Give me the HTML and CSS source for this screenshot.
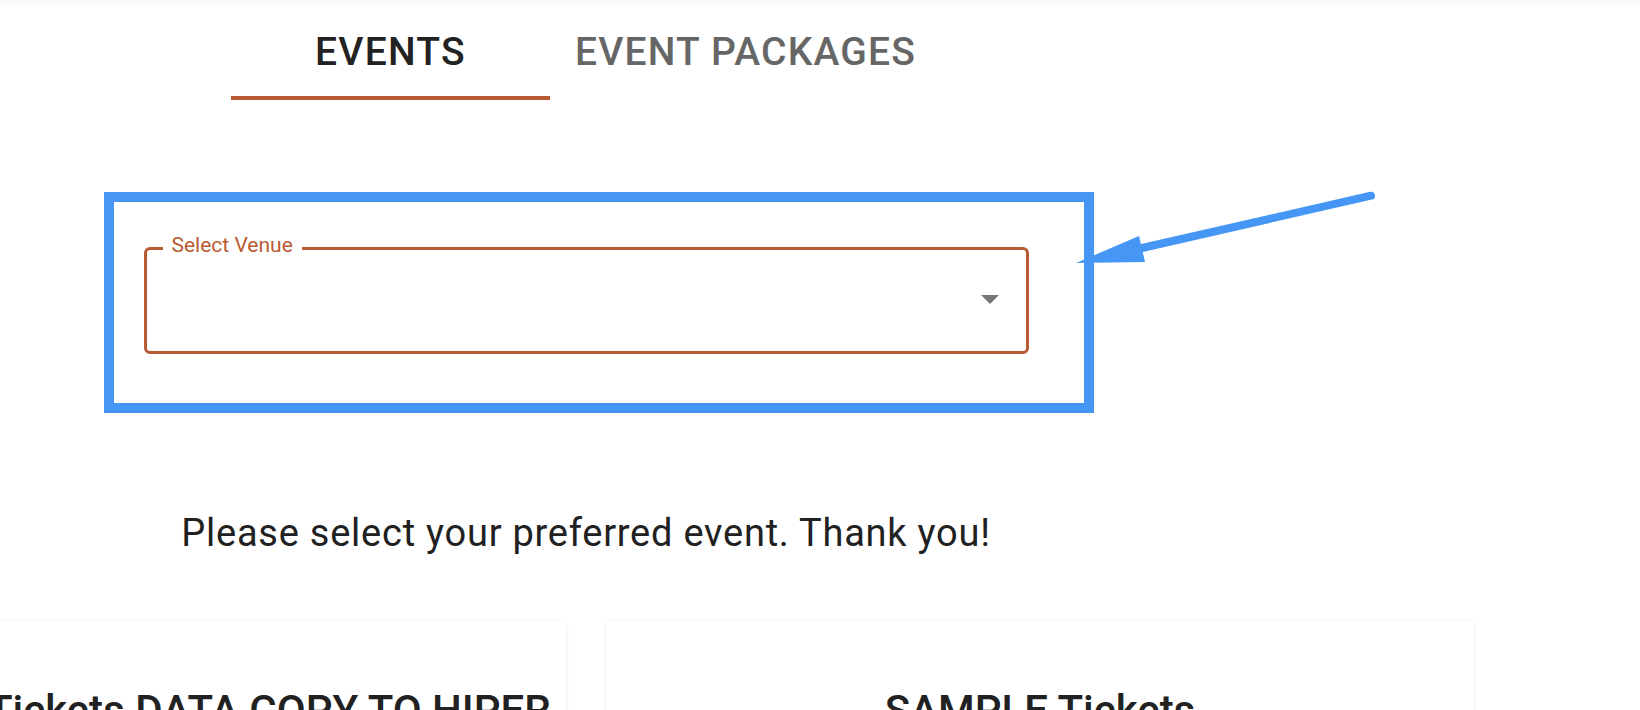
FILE: index.html
```html
<!DOCTYPE html>
<html lang="en">
<head>
<meta charset="utf-8">
<title>Events</title>
<link rel="stylesheet" href="styles.css">
</head>
<body>
<div class="appbar-shadow"></div>
<main class="page">
  <nav class="tabs">
    <div class="tab tab-active">Events</div>
    <div class="tab">Event Packages</div>
  </nav>
  <section class="venue">
    <div class="select">
      <span class="select-label">Select Venue</span>
      <svg class="select-caret" width="18" height="9" viewBox="0 0 18 9"><path d="M0 0H18L9 9Z" fill="#767676"/></svg>
    </div>
  </section>
  <p class="prompt">Please select your preferred event. Thank you!</p>
  <div class="cards">
    <article class="card"><h2 class="card-title">NEW SAMPLE Tickets DATA COPY TO HIPER</h2></article>
    <article class="card"><h2 class="card-title">SAMPLE Tickets</h2></article>
  </div>
</main>
<div class="annot-box"></div>
<svg class="annot-arrow" width="330" height="100" viewBox="0 0 330 100">
  <path d="M311 15.7L82 68" stroke="#4596f5" stroke-width="8" stroke-linecap="round" fill="none"/>
  <polygon points="16,83 79,56 85,82" fill="#4596f5"/>
</svg>
</body>
</html>
```
FILE: styles.css
```css
html, body {
  margin: 0;
  padding: 0;
  overflow: hidden;
  background: #fff;
}

body {
  font-family: Roboto, "Noto Sans", sans-serif;
  color: #212121;
  height: 710px;
  position: relative;
}

.appbar-shadow {
  height: 0;
  box-shadow: 0 0 8px 1px rgba(0, 0, 0, 0.13);
}

.page {
  width: 1776px;
  margin-left: -302px;
  display: flex;
  flex-direction: column;
  align-items: center;
}

.tabs {
  display: flex;
  padding-top: 33px;
}

.tab {
  font-size: 39px;
  line-height: 38px;
  font-weight: 500;
  letter-spacing: 1.2px;
  text-transform: uppercase;
  color: #666;
  padding: 0 25px 25px;
  border-bottom: 4px solid transparent;
  text-align: center;
}

.tab-active {
  color: #222;
  width: 319px;
  box-sizing: border-box;
  padding: 0 0 25px;
  border-bottom-color: #b95b32;
}

.venue {
  position: relative;
  width: 885px;
  margin-top: 147px;
}

.select {
  position: relative;
  height: 107px;
  box-sizing: border-box;
  border: 3px solid #b95b32;
  border-radius: 6px;
  display: flex;
  align-items: center;
  justify-content: flex-end;
  padding-right: 27px;
}

.select-label {
  position: absolute;
  left: 16px;
  top: -15px;
  padding: 0 9px;
  background: #fff;
  font-size: 21px;
  line-height: 21px;
  color: #b95b32;
}

.select-caret {
  display: block;
  margin-bottom: 3px;
}

.prompt {
  margin: 160px 0 0;
  font-size: 38px;
  line-height: 38px;
  letter-spacing: 0.76px;
  color: #212121;
}

.cards {
  display: flex;
  gap: 40px;
  margin-top: 69px;
}

.card {
  width: 868px;
  height: 300px;
  box-sizing: border-box;
  padding-top: 69px;
  border-radius: 8px;
  background: #fff;
  box-shadow: 0 1px 4px rgba(0, 0, 0, 0.1);
  text-align: center;
}

.card-title {
  margin: 0;
  font-size: 42px;
  line-height: 42px;
  font-weight: 500;
  color: #212121;
  white-space: nowrap;
}

.annot-box {
  position: absolute;
  left: 104px;
  top: 192px;
  width: 990px;
  height: 221px;
  box-sizing: border-box;
  border: 10px solid #4596f5;
}

.annot-arrow {
  position: absolute;
  left: 1060px;
  top: 180px;
}
```
